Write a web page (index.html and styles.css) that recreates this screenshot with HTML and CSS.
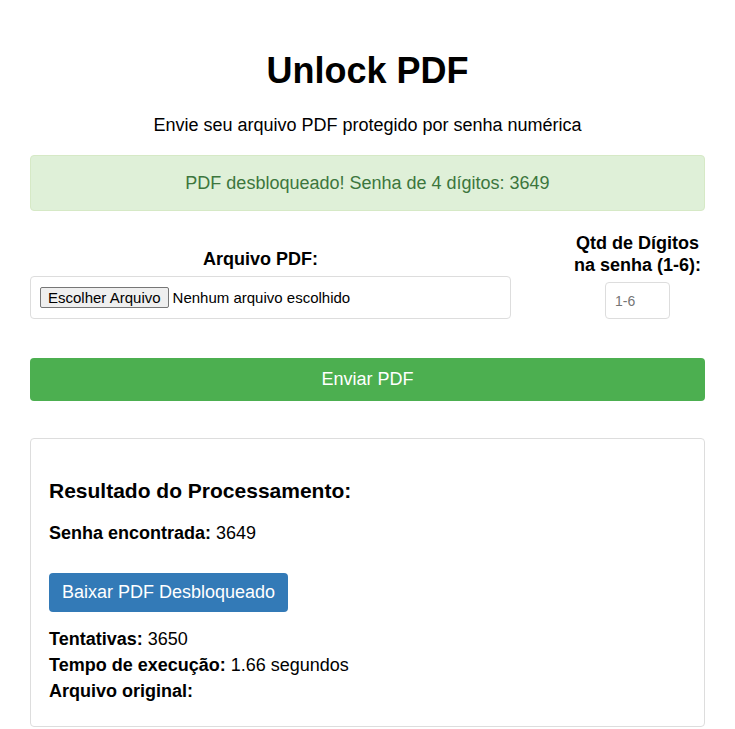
FILE: index.html
```html
<!DOCTYPE html>
<html lang="pt-BR">
<head>
<meta charset="utf-8">
<title>Unlock PDF</title>
<link rel="stylesheet" href="styles.css">
</head>
<body>
<div class="container">
  <h1 class="title">Unlock PDF</h1>
  <p class="subtitle">Envie seu arquivo PDF protegido por senha numérica</p>
  <div class="alert">PDF desbloqueado! Senha de 4 dígitos: 3649</div>
  <form class="form">
    <div class="form-row">
      <div class="field field-file">
        <label class="label label-file">Arquivo PDF:</label>
        <div class="file-box">
          <span class="file-btn">Escolher Arquivo</span><span class="file-name">Nenhum arquivo escolhido</span>
        </div>
      </div>
      <div class="field field-digits">
        <label class="label">Qtd de Dígitos<br>na senha (1-6):</label>
        <input class="num-input" type="text" placeholder="1-6">
      </div>
    </div>
    <button type="button" class="submit">Enviar PDF</button>
  </form>
  <div class="result">
    <h3 class="result-title">Resultado do Processamento:</h3>
    <p class="line"><strong>Senha encontrada:</strong> 3649</p>
    <a class="download">Baixar PDF Desbloqueado</a>
    <p class="line"><strong>Tentativas:</strong> 3650</p>
    <p class="line"><strong>Tempo de execução:</strong> 1.66 segundos</p>
    <p class="line"><strong>Arquivo original:</strong></p>
  </div>
</div>
</body>
</html>
```
FILE: styles.css
```css
* { box-sizing: border-box; }
body {
  margin: 0;
  padding: 0 30px;
  font-family: "Liberation Sans", Arial, sans-serif;
  font-size: 18px;
  color: #000;
  background: #fff;
}
.container { max-width: 675px; margin: 0 auto; padding-top: 50px; }
.title {
  margin: 0 0 24px;
  font-size: 36px;
  line-height: 41px;
  text-align: center;
  font-weight: bold;
}
.subtitle {
  margin: 0 0 19px;
  line-height: 21px;
  text-align: center;
}
.alert {
  background: #dff0d8;
  border: 1px solid #d6e9c6;
  color: #3c763d;
  border-radius: 4px;
  padding: 16px;
  line-height: 22px;
  text-align: center;
}
.form { margin-top: 21px; }
.form-row {
  display: flex;
  align-items: flex-end;
  gap: 59px;
}
.field { display: flex; flex-direction: column; align-items: center; }
.field-file { width: 481px; }
.field-digits { width: 135px; }
.label {
  font-weight: bold;
  line-height: 22px;
  text-align: center;
  margin-bottom: 6px;
}
.label-file { margin-right: 20px; }
.file-box {
  width: 100%;
  border: 1px solid #ddd;
  border-radius: 4px;
  padding: 10px 9px;
  display: flex;
  align-items: center;
  font-size: 15px;
}
.file-btn {
  height: 21px;
  line-height: 19px;
  padding: 0 7px;
  border: 1px solid #767676;
  border-radius: 2px;
  background: #efefef;
  color: #000;
}
.file-name { margin-left: 4px; line-height: 21px; }
.num-input {
  width: 65px;
  height: 37px;
  border: 1px solid #ddd;
  border-radius: 4px;
  padding: 8px 9px;
  font-family: "Liberation Sans", Arial, sans-serif;
  font-size: 14px;
}
.num-input::placeholder { color: #757575; }
.submit {
  display: block;
  width: 100%;
  margin-top: 39px;
  height: 43px;
  border: none;
  border-radius: 4px;
  background: #4caf50;
  color: #fff;
  font-family: "Liberation Sans", Arial, sans-serif;
  font-size: 18px;
}
.result {
  margin-top: 37px;
  border: 1px solid #ddd;
  border-radius: 4px;
  padding: 20px 18px 22px;
}
.result-title {
  margin: 20px 0 17px;
  font-size: 21px;
  line-height: 24px;
}
.line { margin: 0; line-height: 26px; }
.download {
  display: inline-block;
  margin: 27px 0 14px;
  background: #337ab7;
  color: #fff;
  border-radius: 4px;
  padding: 9px 13px;
  line-height: 21px;
}
```
